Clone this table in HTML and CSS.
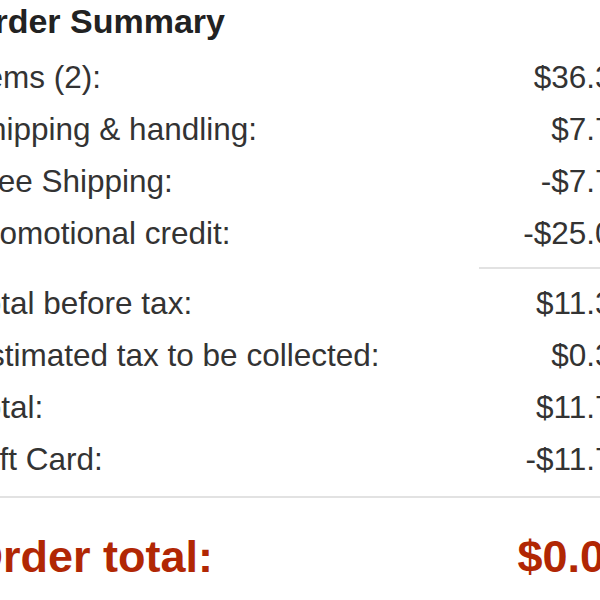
FILE: index.html
```html
<!DOCTYPE html>
<html lang="en">
<head>
<meta charset="utf-8">
<title>Order Summary</title>
<link rel="stylesheet" href="styles.css">
</head>
<body>
<div class="summary">
  <h3 class="title">Order Summary</h3>
  <div class="grid">
    <span class="label">Items (2):</span><span class="value">$36.38</span>
    <span class="label">Shipping &amp; handling:</span><span class="value">$7.78</span>
    <span class="label">Free Shipping:</span><span class="value">-$7.78</span>
    <span class="label">Promotional credit:</span><span class="value">-$25.00</span>
    <div class="divider short"></div>
    <span class="label">Total before tax:</span><span class="value">$11.38</span>
    <span class="label">Estimated tax to be collected:</span><span class="value">$0.34</span>
    <span class="label">Total:</span><span class="value">$11.72</span>
    <span class="label">Gift Card:</span><span class="value">-$11.72</span>
    <div class="divider full"></div>
    <span class="label total">Order total:</span><span class="value total">$0.00</span>
  </div>
</div>
</body>
</html>
```
FILE: styles.css
```css
html, body {
  margin: 0;
  padding: 0;
  background: #ffffff;
  overflow: hidden;
}

body {
  width: 600px;
  height: 600px;
  font-family: "Liberation Sans", Arial, Helvetica, sans-serif;
  color: #333333;
}

.summary {
  margin-left: -32px;
  width: 662px;
}

.title {
  margin: 1px 0 0 0;
  font-size: 34px;
  line-height: 40px;
  font-weight: bold;
  color: #222222;
}

.grid {
  display: grid;
  grid-template-columns: 1fr 151px;
  margin-top: 10px;
}

.label,
.value {
  font-size: 31.5px;
  line-height: 52px;
  white-space: nowrap;
}

.value {
  text-align: right;
}

.divider {
  height: 2px;
  background: #e2e2e2;
}

.divider.short {
  grid-column: 2;
  margin: 8px 0 8px 0;
}

.divider.full {
  grid-column: 1 / span 2;
  margin: 11px 0 29px 0;
}

.total {
  font-size: 45px;
  line-height: 60px;
  font-weight: bold;
  color: #b12704;
}
```
